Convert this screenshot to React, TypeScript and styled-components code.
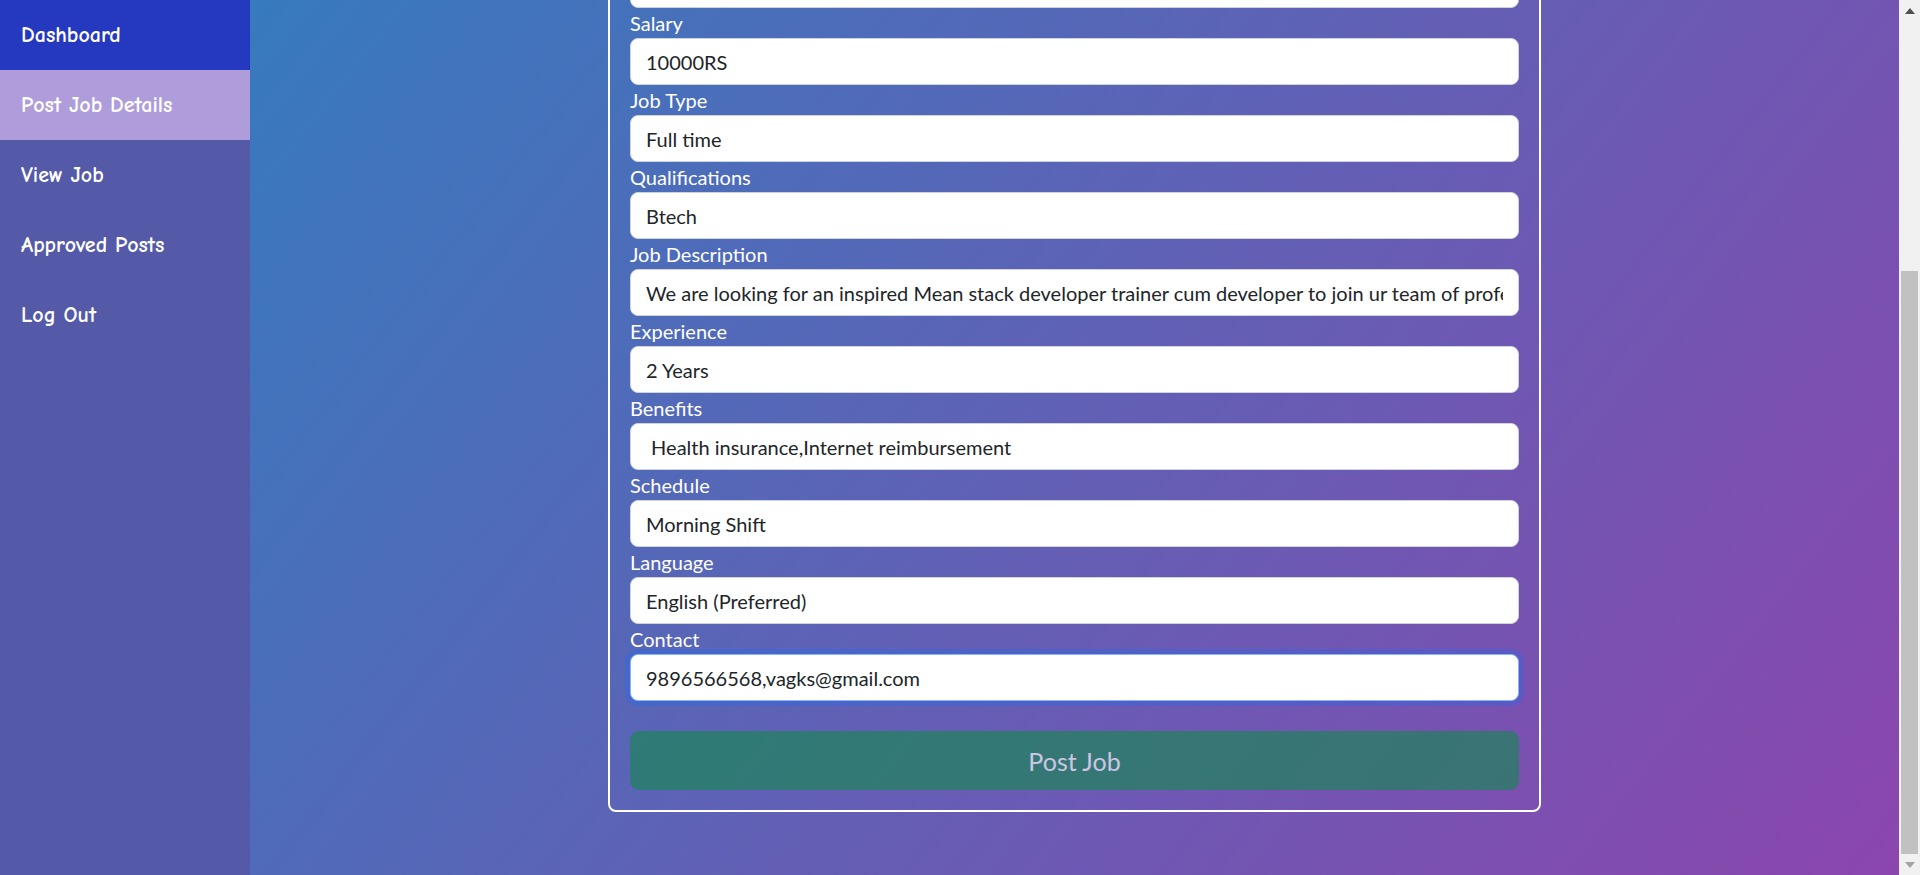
import React from "react";
import styled, { createGlobalStyle } from "styled-components";

const GlobalStyle = createGlobalStyle`
  html, body {
    margin: 0;
    padding: 0;
    height: 100%;
    overflow: hidden;
  }
  body {
    font-family: "Segoe UI", Lato, "Noto Sans", sans-serif;
  }
  #root {
    height: 100%;
  }
  * {
    box-sizing: border-box;
  }
`;

const Layout = styled.div`
  display: flex;
  height: 100vh;
`;

const Sidebar = styled.nav`
  width: 250px;
  flex-shrink: 0;
  height: 100vh;
  background: #5459a8;
  display: flex;
  flex-direction: column;
`;

type Variant = "active" | "highlight" | "plain";

const NavItem = styled.a<{ $variant: Variant }>`
  display: flex;
  align-items: center;
  height: 70px;
  padding: 0 0 0 21px;
  color: #ffffff;
  font-family: "Comic Sans MS", "Comic Neue", Lato, sans-serif;
  font-size: 22px;
  font-weight: 700;
  text-decoration: none;
  background: ${(p) =>
    p.$variant === "active"
      ? "#2538c0"
      : p.$variant === "highlight"
      ? "#ae9dda"
      : "transparent"};
`;

const Main = styled.main`
  flex: 1;
  height: 100vh;
  overflow: hidden;
  display: flex;
  flex-direction: column-reverse;
  background: linear-gradient(128deg, #377abe 0%, #8b46ad 100%);
`;

const ScrollBar = styled.div`
  width: 21px;
  flex-shrink: 0;
  height: 100vh;
  background: #f1f1f1;
  display: flex;
  flex-direction: column;
`;

const ScrollArrow = styled.div`
  height: 21px;
  display: flex;
  align-items: center;
  justify-content: center;
`;

const ScrollTrack = styled.div`
  flex: 1;
  display: flex;
  flex-direction: column;
  justify-content: flex-end;
  padding: 0 2px;
`;

const ScrollThumb = styled.div`
  height: 583px;
  background: #c1c1c1;
`;

const Content = styled.div`
  padding: 20px 0 63px;
  display: flex;
  justify-content: center;
`;

const Card = styled.form`
  width: 933px;
  border: 2px solid #ffffff;
  border-radius: 8px;
  padding: 20px;
  display: flex;
  flex-direction: column;
`;

const Title = styled.h3`
  margin: 0;
  height: 31px;
  font-size: 24px;
  line-height: 31px;
  font-weight: 500;
  color: #ffffff;
  text-align: center;
`;

const Field = styled.div`
  display: flex;
  flex-direction: column;
`;

const Label = styled.label`
  display: block;
  height: 30px;
  color: #ffffff;
  font-size: 20px;
  line-height: 31px;
`;

const Input = styled.input<{ $focused?: boolean }>`
  display: block;
  width: 100%;
  height: 47px;
  padding: 0 15px;
  font-family: "Segoe UI", Lato, "Noto Sans", sans-serif;
  font-size: 20px;
  color: #212529;
  background: #ffffff;
  border: 1px solid ${(p) => (p.$focused ? "#86b7fe" : "#ced4da")};
  border-radius: 8px;
  outline: none;
  box-shadow: ${(p) =>
    p.$focused ? "0 0 0 5px rgba(13, 110, 253, 0.25)" : "none"};
`;

const SubmitButton = styled.button`
  margin-top: 30px;
  width: 100%;
  height: 59px;
  font-family: "Segoe UI", Lato, "Noto Sans", sans-serif;
  font-size: 25px;
  color: #ffffff;
  background: #198754;
  border: 1px solid #198754;
  border-radius: 9px;
  opacity: 0.65;
  cursor: default;
`;

const navItems: { label: string; variant: Variant }[] = [
  { label: "Dashboard", variant: "active" },
  { label: "Post Job Details", variant: "highlight" },
  { label: "View Job", variant: "plain" },
  { label: "Approved Posts", variant: "plain" },
  { label: "Log Out", variant: "plain" },
];

const fields: { label: string; value: string; focused?: boolean }[] = [
  { label: "Job Title", value: "Mean Stack Developer" },
  { label: "Company Name", value: "Vagks Technologies" },
  { label: "Location", value: "Kochi" },
  { label: "Vacancy", value: "2" },
  { label: "Salary", value: "10000RS" },
  { label: "Job Type", value: "Full time" },
  { label: "Qualifications", value: "Btech" },
  {
    label: "Job Description",
    value:
      "We are looking for an inspired Mean stack developer trainer cum developer to join ur team of professionals",
  },
  { label: "Experience", value: "2 Years" },
  { label: "Benefits", value: " Health insurance,Internet reimbursement" },
  { label: "Schedule", value: "Morning Shift" },
  { label: "Language", value: "English (Preferred)" },
  { label: "Contact", value: "9896566568,vagks@gmail.com", focused: true },
];

export default function App() {
  return (
    <>
      <GlobalStyle />
      <Layout>
        <Sidebar>
          {navItems.map((item) => (
            <NavItem key={item.label} href="#" $variant={item.variant}>
              {item.label}
            </NavItem>
          ))}
        </Sidebar>
        <Main>
          <Content>
            <Card onSubmit={(e) => e.preventDefault()}>
              <Title>Post Job Details</Title>
              {fields.map((f) => (
                <Field key={f.label}>
                  <Label>{f.label}</Label>
                  <Input
                    type="text"
                    defaultValue={f.value}
                    readOnly
                    $focused={f.focused}
                  />
                </Field>
              ))}
              <SubmitButton type="submit" disabled>
                Post Job
              </SubmitButton>
            </Card>
          </Content>
        </Main>
        <ScrollBar>
          <ScrollArrow>
            <svg width="10" height="6" viewBox="0 0 10 6">
              <polygon points="0,6 5,0 10,6" fill="#505050" />
            </svg>
          </ScrollArrow>
          <ScrollTrack>
            <ScrollThumb />
          </ScrollTrack>
          <ScrollArrow>
            <svg width="10" height="6" viewBox="0 0 10 6">
              <polygon points="0,0 10,0 5,6" fill="#a3a3a3" />
            </svg>
          </ScrollArrow>
        </ScrollBar>
      </Layout>
    </>
  );
}
